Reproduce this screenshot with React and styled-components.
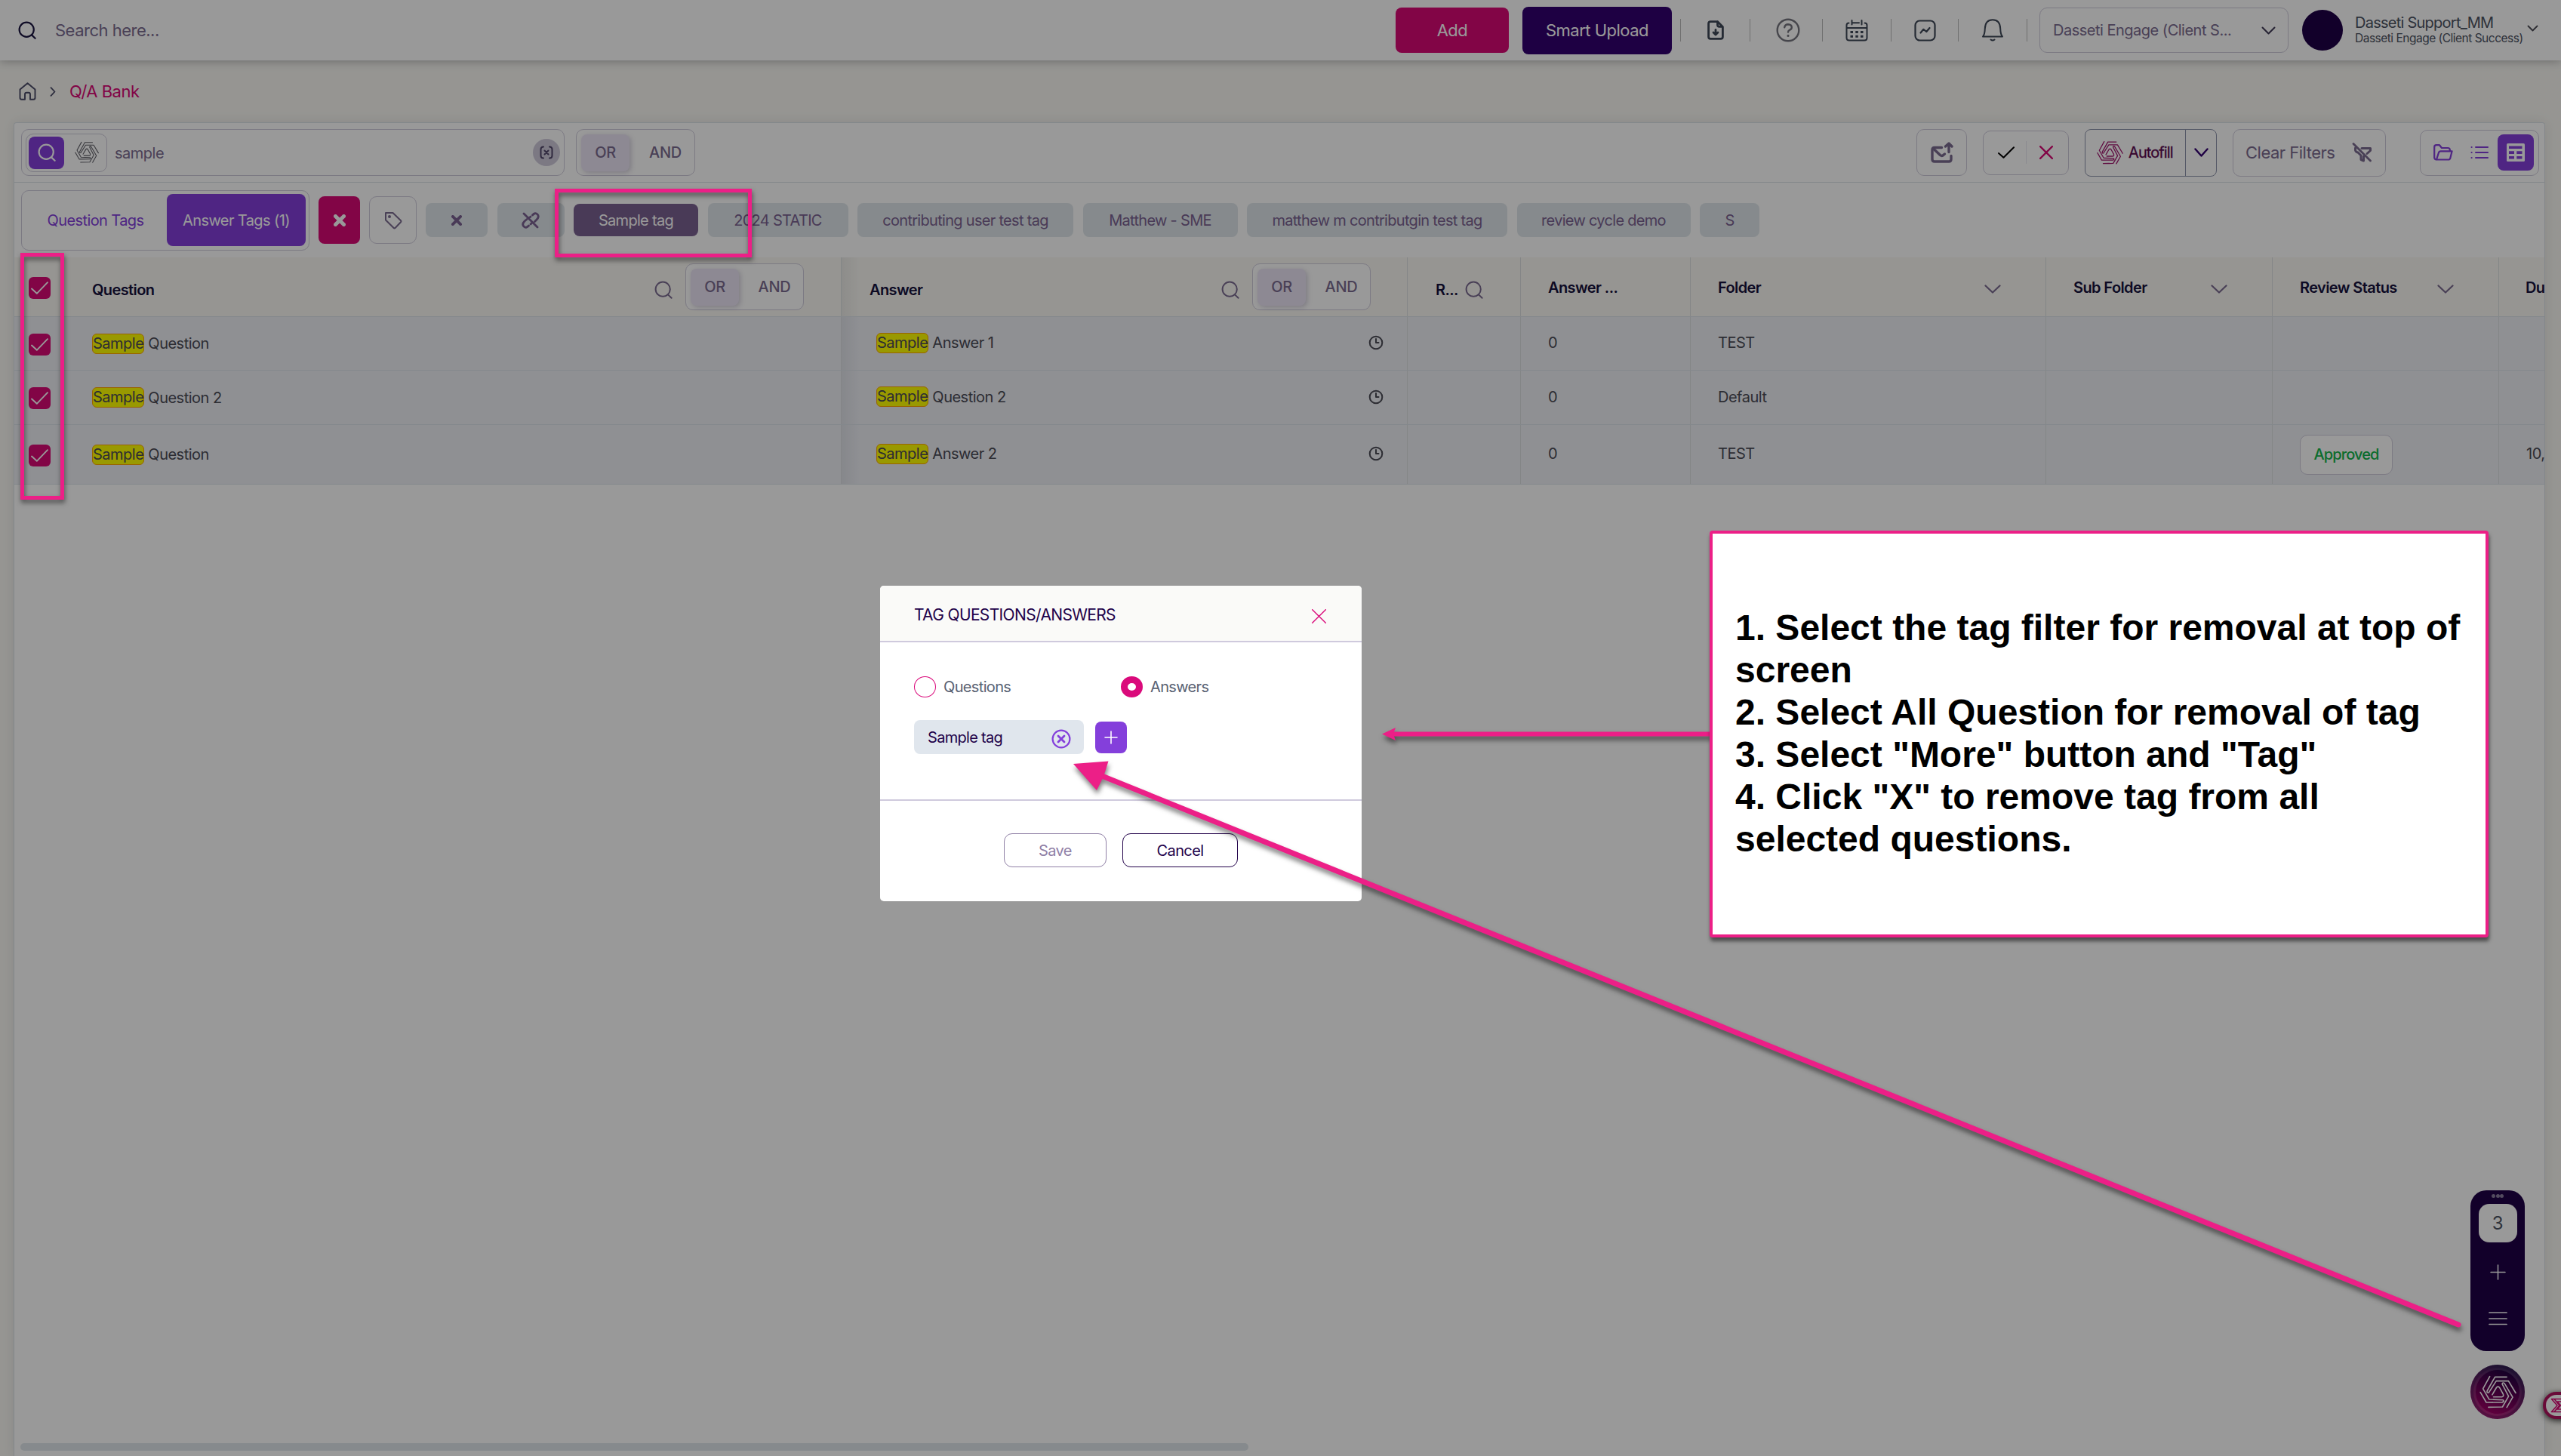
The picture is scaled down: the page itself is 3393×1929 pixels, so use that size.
import React from 'react'
import styled, { createGlobalStyle, css } from 'styled-components'


const tags = [
    { label: 'Sample tag', width: 165, active: true },
    { label: '2024 STATIC', width: 186 },
    { label: 'contributing user test tag', width: 286 },
    { label: 'Matthew - SME', width: 205 },
    { label: 'matthew m contributgin test tag', width: 345 },
    { label: 'review cycle demo', width: 230 },
    { label: 'S', width: 79 },
]

const rows = [
    { question: 'Question', answer: 'Answer 1', count: 0, folder: 'TEST', height: 71 },
    { question: 'Question 2', answer: 'Question 2', count: 0, folder: 'Default', height: 72 },
    { question: 'Question', answer: 'Answer 2', count: 0, folder: 'TEST', status: 'Approved', due: '10,', height: 79 },
]

const steps = [
    '1. Select the tag filter for removal at top of screen',
    '2. Select All Question for removal of tag',
    '3. Select "More" button and "Tag"',
    '4. Click "X" to remove tag from all selected questions.',
]

// icons

function Icon({ w, h = w, sw = 2, color = 'currentColor', children }) {
    return (
        <Glyph width={w} height={h} viewBox={`0 0 ${w} ${h}`} fill="none" stroke={color} strokeWidth={sw}
            strokeLinecap="round" strokeLinejoin="round">
            {children}
        </Glyph>
    )
}

const SearchIcon = ({ size = 24, sw = 2 }) => (
    <svg width={size} height={size} viewBox="0 0 24 24" fill="none" stroke="currentColor" strokeWidth={sw} strokeLinecap="round">
        <circle cx="11.2" cy="11.2" r="9.6" />
        <path d="M18 18.4l4.6 4.4" />
    </svg>
)

const Chevron = ({ w = 22, h = 12, sw = 2.2 }) => (
    <Icon w={w} h={h} sw={sw}><path d={`M1.5 1.5L${w / 2} ${h - 1.5}L${w - 1.5} 1.5`} /></Icon>
)

const Cross = ({ size = 18, sw = 2 }) => (
    <Icon w={size} sw={sw}><path d={`M${sw / 2} ${sw / 2}L${size - sw / 2} ${size - sw / 2}M${size - sw / 2} ${sw / 2}L${sw / 2} ${size - sw / 2}`} /></Icon>
)

const Plus = ({ size = 20, sw = 1.6 }) => (
    <Icon w={size} sw={sw}><path d={`M${size / 2} 1V${size - 1}M1 ${size / 2}H${size - 1}`} /></Icon>
)

const Check = ({ w = 22, h = 16, sw = 2 }) => (
    <Icon w={w} h={h} sw={sw}><path d={`M1 ${h * 0.56}L${w * 0.34} ${h - 1.2}L${w - 1} 1.2`} /></Icon>
)

// one arm of the mark, repeated three times around the centre
const arm = 'M35-61H-12L-43-6Q-46 4-37 2L-7-45H42L71 3'

const Spiral = ({ size = 48, sw = 5 }) => (
    <svg width={size} height={size} viewBox="-74 -74 148 148" fill="none" stroke="currentColor" strokeWidth={sw}
        strokeLinecap="round" strokeLinejoin="round">
        {[0, 120, 240].map(deg => <path key={deg} d={arm} transform={`rotate(${deg})`} />)}
        <path d="M-23 10L-6-19Q0-26 6-19L21 8Q24 18 15 19H-18" />
    </svg>
)

const Toggle = ({ width }) => (
    <ToggleBox $width={width}>
        <TogglePill>OR</TogglePill>
        <ToggleOption>AND</ToggleOption>
    </ToggleBox>
)

const TopBar = () => (
    <Header>
        <GlobalSearch>
            <SearchIcon size={24} sw={2.2} />
            <span>Search here...</span>
        </GlobalSearch>
        <AddButton>Add</AddButton>
        <UploadButton>Smart Upload</UploadButton>

        <HeaderSlot $width={93} $first>
            <Icon w={22} h={26} sw={2.8}>
                <path d="M13.5 1.6H4.2Q1.6 1.6 1.6 4.2V21.8Q1.6 24.4 4.2 24.4H17.8Q20.4 24.4 20.4 21.8V8.4L13.5 1.6V6Q13.5 8.4 16 8.4H20" />
                <path d="M11 12.5V18.5M8 16L11 19L14 16" />
            </Icon>
        </HeaderSlot>
        <HeaderSlot $width={96} $muted $shift={5}>
            <Icon w={32} sw={2.4}>
                <circle cx="16" cy="16" r="14.3" />
                <path d="M11.2 12.2Q12 8.2 16 8.2Q20.8 8.4 20.8 12.2Q20.8 14.6 18.2 15.6Q16 16.6 16 18.6" />
                <path d="M16 23.3V23.5" strokeWidth="3" />
            </Icon>
        </HeaderSlot>
        <HeaderSlot $width={91}>
            <Icon w={30} h={29} sw={2}>
                <path d="M4.5 4.5Q1.5 4.5 1.5 7.5V24Q1.5 27.5 5 27.5H25Q28.5 27.5 28.5 24V7.5Q28.5 4.5 25.5 4.5M10 4.2H18M1.5 11H28.5M8.5 1V6.5M21.5 1V6.5" />
                <path d="M6.5 16.5H10M13.3 16.5H16.8M20 16.5H23.5M6.5 22.2H10M13.3 22.2H16.8M20 22.2H23.5" strokeWidth="3" strokeLinecap="butt" />
            </Icon>
        </HeaderSlot>
        <HeaderSlot $width={89}>
            <Icon w={29} sw={2.2}>
                <rect x="1.5" y="1.5" width="26" height="26" rx="6" />
                <path d="M8.5 17.5L12.4 12.8L16.3 16L20.5 11" />
            </Icon>
        </HeaderSlot>
        <HeaderSlot $width={91}>
            <Icon w={30} h={30} sw={2}>
                <path d="M2 23.5H28Q25.5 21 25.2 13Q24.8 1.3 15 1.3Q5.2 1.3 4.8 13Q4.5 21 2 23.5Z" />
                <path d="M12.5 27.5Q15 29.5 17.5 27.5" />
            </Icon>
        </HeaderSlot>

        <ClientSelect>
            <span>Dasseti Engage (Client S...</span>
            <Chevron w={19} h={11} sw={2} />
        </ClientSelect>
        <Avatar />
        <UserInfo>
            <UserName>Dasseti Support_MM</UserName>
            <UserOrg>Dasseti Engage (Client Success)</UserOrg>
        </UserInfo>
        <UserCaret><Chevron w={15} h={9} sw={1.8} /></UserCaret>
    </Header>
)

const Toolbar = () => (
    <ToolbarRow>
        <SearchBox>
            <SearchModes>
                <ModeButton $active><SearchIcon size={24} sw={2.2} /></ModeButton>
                <ModeButton><Spiral size={32} sw={5} /></ModeButton>
            </SearchModes>
            <SearchValue>sample</SearchValue>
            <ClearBadge>
                <Icon w={18} h={18} sw={2}>
                    <path d="M5 1.5Q1.5 1.5 1.5 5V13Q1.5 16.5 5 16.5M13 1.5Q16.5 1.5 16.5 5V13Q16.5 16.5 13 16.5M6.5 6.5L11.5 11.5M11.5 6.5L6.5 11.5" />
                </Icon>
            </ClearBadge>
        </SearchBox>
        <Toggle width={158} />
        <Spacer />
        <OutlineButton $width={67}>
            <Icon w={30} h={28} sw={3.4}>
                <path d="M14.5 7.5H5Q2 7.5 2 10.5V23Q2 26 5 26H24Q27 26 27 23V18.5" />
                <path d="M3.5 9L12.5 17.5Q15 19.5 17 17.2L18.5 16" />
                <path d="M24 13.5V3M19.5 6L24 2L28 6" />
            </Icon>
        </OutlineButton>
        <DecisionBox>
            <Approve><Check w={22} h={16} sw={2} /></Approve>
            <Reject><Cross size={18} sw={2.2} /></Reject>
        </DecisionBox>
        <AutofillBox>
            <AutofillMain><Spiral size={35} sw={5.4} /><span>Autofill</span></AutofillMain>
            <AutofillCaret><Chevron w={19} h={12} sw={2.4} /></AutofillCaret>
        </AutofillBox>
        <ClearFilters>
            <span>Clear Filters</span>
            <Icon w={26} h={26} sw={3}>
                <path d="M2 1.5L24.5 24" strokeWidth="2.8" />
                <path d="M13 7.5H24.5V10.5L20 14.5M4.5 7V10Q5 12.5 8 13L12 17V22.5L15.5 24V18" />
            </Icon>
        </ClearFilters>
        <ViewModes>
            <Icon w={26} h={22} sw={2.2}>
                <path d="M4 20.5Q1.2 20.5 1.2 17.8V3.8Q1.2 1.2 3.8 1.2H8L11 5H19Q21.8 5 21.8 7.5V9M4 20.5L7 11.2Q7.5 9.3 9.5 9.3H24.6L22.3 18.5Q21.8 20.5 19.8 20.5H4" />
            </Icon>
            <Icon w={24} h={18} sw={2}>
                <path d="M7 2H23M7 9H23M7 16H23M1.5 2H1.7M1.5 9H1.7M1.5 16H1.7" />
            </Icon>
            <ActiveView>
                <svg width="24" height="24" viewBox="0 0 24 24">
                    <rect width="24" height="24" rx="1.5" fill="#fff" />
                    <path d="M3 3.5H20.5V7H3zM3 10.3H10V14H3zM13.3 10.3H20.5V14H13.3zM3 17H10V20.5H3zM13.3 17H20.5V20.5H13.3z" fill="#843fdb" />
                </svg>
            </ActiveView>
        </ViewModes>
    </ToolbarRow>
)

const TagBar = () => (
    <TagRow>
        <TagTabs>
            <TagTab $width={192}>Question Tags</TagTab>
            <TagTab $width={184} $active>Answer Tags (1)</TagTab>
        </TagTabs>
        <RemoveButton><Cross size={16} sw={5} /></RemoveButton>
        <TagButton>
            <Icon w={24} h={24} sw={2}>
                <path d="M2 2H11.5L22 12.2Q22.8 13.2 22 14.2L14.6 22Q13.5 22.8 12.6 22L2 11.5Z" />
                <circle cx="7" cy="7" r="1" />
            </Icon>
        </TagButton>
        <Tags>
            <Tag $width={82}><Cross size={14} sw={3.8} /></Tag>
            <Tag $width={89}>
                <Icon w={24} h={22} sw={2.8}>
                    <path d="M3 2L21 20M14.5 4Q18 0 21 3T20 10L17.5 12.5M9.5 18Q6 22 3 19T4 12L7 9.5M10 8L12 6M14 14L12 16" />
                </Icon>
            </Tag>
            {
                tags.map(({ label, width, active }) => <Tag key={label} $width={width} $active={active}>{label}</Tag>)
            }
        </Tags>
    </TagRow>
)

const CheckCell = () => <Checkbox><Check w={23} h={17} sw={1.9} /></Checkbox>

const Table = () => (
    <div>
        <HeadRow>
            <Cell $left={19} $right={49}>
                <CheckCell />
                <HeadText $lead $low>Question</HeadText>
                <Spacer />
                <HeadSearch><SearchIcon size={24} /></HeadSearch>
                <Toggle width={157} />
            </Cell>
            <Cell $left={37} $right={48} $shaded>
                <HeadText $low>Answer</HeadText>
                <Spacer />
                <HeadSearch><SearchIcon size={24} /></HeadSearch>
                <Toggle width={157} />
            </Cell>
            <Cell $left={37}>
                <HeadText $low>R...</HeadText>
                <HeadSearch $near><SearchIcon size={24} /></HeadSearch>
            </Cell>
            <Cell $left={36}><HeadText>Answer ...</HeadText></Cell>
            <Cell $left={36} $right={59}><HeadText>Folder</HeadText><Spacer /><HeadCaret><Chevron /></HeadCaret></Cell>
            <Cell $left={36} $right={59}><HeadText>Sub Folder</HeadText><Spacer /><HeadCaret><Chevron /></HeadCaret></Cell>
            <Cell $left={36} $right={59}><HeadText>Review Status</HeadText><Spacer /><HeadCaret><Chevron /></HeadCaret></Cell>
            <Cell $left={35}><HeadText>Du</HeadText></Cell>
        </HeadRow>
        {
            rows.map((row, index) => (
                <BodyRow key={index} $height={row.height}>
                    <Cell $left={19}>
                        <CheckCell />
                        <Match $lead>Sample</Match>
                        <MatchRest>{row.question}</MatchRest>
                    </Cell>
                    <Cell $left={46} $right={31} $shaded $up>
                        <Match>Sample</Match>
                        <MatchRest>{row.answer}</MatchRest>
                        <Spacer />
                        <Icon w={20} sw={2}><circle cx="10" cy="10" r="8.3" /><path d="M10 5V10H13.5" /></Icon>
                    </Cell>
                    <Cell />
                    <Cell $left={36} $up>{row.count}</Cell>
                    <Cell $left={36} $up>{row.folder}</Cell>
                    <Cell />
                    <Cell $left={36}>{row.status && <Status>{row.status}</Status>}</Cell>
                    <Cell $left={36} $up>{row.due}</Cell>
                </BodyRow>
            ))
        }
    </div>
)

const Widget = () => (
    <WidgetColumn>
        <WidgetPill>
            <Dots><i /><i /><i /></Dots>
            <WidgetCount>3</WidgetCount>
            <Plus size={21} sw={1.5} />
            <Icon w={25} h={18} sw={1.7}><path d="M1 1H24M1 9H24M1 16.5H24" /></Icon>
        </WidgetPill>
        <WidgetLogo><Spiral size={49} sw={5} /></WidgetLogo>
    </WidgetColumn>
)

const TagModal = () => (
    <Modal>
        <ModalHead>
            <span>TAG QUESTIONS/ANSWERS</span>
            <Cross size={19} sw={1.4} />
        </ModalHead>
        <ModalBody>
            <Choices>
                <Choice><Radio />Questions</Choice>
                <Choice><Radio $checked />Answers</Choice>
            </Choices>
            <Assigned>
                <AssignedTag>
                    Sample tag
                    <Icon w={26} sw={2.2} color="#843fdb">
                        <circle cx="13" cy="13" r="11.4" />
                        <path d="M9 9L17 17M17 9L9 17" strokeWidth="2.8" />
                    </Icon>
                </AssignedTag>
                <AddTag><Plus size={18} sw={1.6} /></AddTag>
            </Assigned>
        </ModalBody>
        <ModalFoot>
            <ModalButton $width={136} $disabled>Save</ModalButton>
            <ModalButton $width={153}>Cancel</ModalButton>
        </ModalFoot>
    </Modal>
)

const Arrows = () => (
    <ArrowLayer width="3393" height="1929" viewBox="0 0 3393 1929">
        <path d="M2267 972.5H1845" stroke="#ec1f87" strokeWidth="6" />
        <path d="M1831 972.5L1849 964L1846 972.5L1849 981Z" fill="#ec1f87" />
        <path d="M3257 1755L1460 1028" stroke="#ec1f87" strokeWidth="7" strokeLinecap="round" />
        <path d="M1422 1012L1468.5 1008.5L1462 1029L1453 1047Z" fill="#ec1f87" />
    </ArrowLayer>
)

function App() {
    return (
        <Screen>
            <GlobalStyle />
            <TopBar />
            <Breadcrumb>
                <Icon w={23} h={24} sw={1.9}>
                    <path d="M1.5 9.5L11.5 1.2L21.5 9.5V20.5Q21.5 22.8 19.2 22.8H15V16Q15 13.8 12.8 13.8H10.2Q8 13.8 8 16V22.8H3.8Q1.5 22.8 1.5 20.5Z" />
                </Icon>
                <Icon w={8} h={13} sw={1.8}><path d="M1.5 1.2L6.5 6.5L1.5 11.8" /></Icon>
                <a>Q/A Bank</a>
            </Breadcrumb>
            <Panel>
                <Toolbar />
                <TagBar />
                <Table />
                <Spacer />
                <ScrollThumb />
            </Panel>
            <Widget />
            <EdgeBadge>
                <Icon w={24} h={20} sw={1.6}>
                    <path d="M24 1.5H1.5L9 10L1.5 18.5H24M24 5H9L13.5 10L9 15H24M5 1.5L12 10L5 18.5" />
                </Icon>
            </EdgeBadge>
            <Backdrop />

            <TagModal />
            <Marker $left={735} $top={250} $width={261} $height={91} />
            <Marker $left={27} $top={335} $width={58} $height={327} />
            <Arrows />
            <Callout>
                {steps.map(step => <p key={step}>{step}</p>)}
            </Callout>
        </Screen>
    )
}

export default App

const GlobalStyle = createGlobalStyle`
    * {
        box-sizing: border-box;
    }

    body {
        margin: 0;
        background-color: #faf9f4;
    }
`

const Glyph = styled.svg`
    display: block;
    flex: none;
`

const Screen = styled.div`
    position: relative;
    display: flex;
    flex-direction: column;
    width: 3393px;
    height: 1929px;
    overflow: hidden;
    background-color: #faf9f4;
    font-family: Inter, 'Liberation Sans', sans-serif;
    font-size: 20px;
    letter-spacing: -0.5px;
    color: #4b4b55;
    white-space: nowrap;
`

const Spacer = styled.div`
    flex: 1;
`

const center = css`
    display: flex;
    align-items: center;
    justify-content: center;
`

const outline = css`
    border: 1px solid #cfcbdb;
    border-radius: 10px;
`

const Header = styled.header`
    position: relative;
    display: flex;
    align-items: center;
    flex: none;
    height: 80px;
    background-color: #fff;
    box-shadow: 0 1px 12px rgba(40, 40, 50, 0.35);
`

const GlobalSearch = styled.div`
    display: flex;
    align-items: center;
    flex: none;
    width: 1849px;
    padding-left: 24px;
    gap: 25px;
    color: #1a1440;
    font-size: 22px;

    > span {
        color: #7b6b90;
    }
`

const AddButton = styled.button`
    ${center}
    flex: none;
    width: 150px;
    height: 60px;
    margin-right: 18px;
    border: 0;
    border-radius: 8px;
    background-color: #d90975;
    color: #fff;
    font: inherit;
    font-size: 22px;
    letter-spacing: -0.5px;
`

const UploadButton = styled(AddButton)`
    width: 198px;
    height: 63px;
    margin-right: 11px;
    background-color: #320071;
`

const HeaderSlot = styled.div`
    ${center}
    flex: none;
    width: ${({ $width }) => $width}px;
    height: 30px;
    padding-left: ${({ $shift }) => $shift || 0}px;
    border-right: 1px solid #bbb;
    border-left: ${({ $first }) => $first ? '1px solid #bbb' : '0'};
    color: ${({ $muted }) => $muted ? '#76767f' : '#3f4858'};
`

const ClientSelect = styled.div`
    ${outline}
    display: flex;
    align-items: center;
    justify-content: space-between;
    flex: none;
    width: 330px;
    height: 60px;
    margin-left: 16px;
    padding: 0 16px 0 17px;
    color: #3f3a55;

    > span {
        color: #7b6b90;
    }
`

const Avatar = styled.div`
    flex: none;
    width: 54px;
    height: 54px;
    margin: 0 16px 0 18px;
    border-radius: 50%;
    background-color: #1e0046;
`

const UserInfo = styled.div`
    flex: none;
    width: 228px;
    color: #4b5262;
`

const UserName = styled.div`
    line-height: 21px;
    letter-spacing: -0.75px;
`

const UserOrg = styled.div`
    font-size: 15.5px;
    line-height: 20px;
`

const UserCaret = styled.div`
    margin-bottom: 6px;
`

const Breadcrumb = styled.nav`
    display: flex;
    align-items: center;
    flex: none;
    height: 82px;
    padding-left: 25px;
    gap: 18px;
    color: #4a4a66;
    font-size: 22px;

    > a {
        color: #d90975;
    }
`

const Panel = styled.main`
    display: flex;
    flex-direction: column;
    flex: 1;
    width: 3354px;
    margin-left: 18px;
    overflow: hidden;
    border: 1px solid #dbe2e8;
    border-bottom: 0;
    border-radius: 4px 4px 0 0;
    background-color: #fff;
    box-shadow: 0 0 16px rgba(40, 40, 60, 0.1);
`

const ToolbarRow = styled.div`
    display: flex;
    align-items: center;
    height: 79px;
    padding: 0 7px 0 9px;
    border-bottom: 1px solid #d9e1e6;
`

const SearchBox = styled.div`
    ${outline}
    display: flex;
    align-items: center;
    width: 720px;
    height: 62px;
    margin-right: 15px;
    padding: 0 5px;
`

const SearchModes = styled.div`
    ${outline}
    display: flex;
    align-items: center;
    width: 108px;
    height: 51px;
    padding-left: 3px;
    gap: 13px;
`

const ModeButton = styled.div`
    ${center}
    width: ${({ $active }) => $active ? 47 : 33}px;
    height: 43px;
    border-radius: 8px;
    background-color: ${({ $active }) => $active ? '#843fdb' : 'transparent'};
    color: ${({ $active }) => $active ? '#fff' : '#5e5e66'};
`

const SearchValue = styled.div`
    flex: 1;
    margin-left: 10px;
    padding-top: 2px;
    color: #7b6b90;
`

const ClearBadge = styled.div`
    ${center}
    width: 36px;
    height: 36px;
    border-radius: 50%;
    background-color: #cfcadb;
    color: #51466a;
`

const ToggleBox = styled.div`
    ${outline}
    display: flex;
    align-items: center;
    flex: none;
    width: ${({ $width }) => $width}px;
    height: 62px;
    padding-left: 6px;
    background-color: #fff;
    color: #7b6b90;
    font-weight: 500;
    letter-spacing: -0.3px;
`

const TogglePill = styled.div`
    ${center}
    width: 64px;
    height: 49px;
    border-radius: 8px;
    background-color: #ebe5f5;
    box-shadow: 2px 2px 6px rgba(80, 60, 110, 0.25);
`

const ToggleOption = styled.div`
    ${center}
    flex: 1;
    padding-left: 9px;
`

const OutlineButton = styled.div`
    ${outline}
    ${center}
    flex: none;
    width: ${({ $width }) => $width}px;
    height: 62px;
    margin-right: 21px;
    color: #7b6b90;
`

const DecisionBox = styled.div`
    ${outline}
    display: flex;
    align-items: center;
    width: 114px;
    height: 59px;
    margin-right: 21px;
`

const Approve = styled.div`
    ${center}
    width: 57px;
    height: 30px;
    padding-left: 4px;
    border-right: 1px solid #e6e6ee;
    color: #000;
`

const Reject = styled.div`
    ${center}
    flex: 1;
    padding-right: 4px;
    color: #d90975;
`

const AutofillBox = styled.div`
    display: flex;
    width: 175px;
    height: 63px;
    margin-right: 21px;
    border: 1px solid #8d93aa;
    border-radius: 8px;
`

const AutofillMain = styled.div`
    display: flex;
    align-items: center;
    width: 133px;
    padding-left: 15px;
    gap: 7px;
    border-right: 1px solid #8d93aa;
    color: #a0166e;

    > span {
        color: #5c0a50;
        letter-spacing: -0.9px;
        -webkit-text-stroke: 0.3px #5c0a50;
    }
`

const AutofillCaret = styled.div`
    ${center}
    flex: 1;
    color: #320071;
`

const ClearFilters = styled(OutlineButton)`
    justify-content: space-between;
    width: 203px;
    height: 63px;
    margin-right: 45px;
    padding: 0 18px 0 16px;
    font-size: 22px;
`

const ViewModes = styled.div`
    ${outline}
    display: flex;
    align-items: center;
    justify-content: space-between;
    width: 158px;
    height: 61px;
    padding: 0 6px 0 17px;
    color: #843fdb;

    > svg:nth-of-type(2) {
        margin: 0 -10px 0 0;
    }
`

const ActiveView = styled.div`
    ${center}
    width: 48px;
    height: 48px;
    border-radius: 8px;
    background-color: #843fdb;
`

const TagRow = styled.div`
    display: flex;
    align-items: center;
    height: 99px;
    padding-left: 9px;
`

const TagTabs = styled.div`
    ${outline}
    display: flex;
    align-items: center;
    width: 382px;
    height: 80px;
    margin-right: 12px;
`

const TagTab = styled.div`
    ${center}
    width: ${({ $width }) => $width}px;
    height: 69px;
    padding-left: ${({ $active }) => $active ? 0 : 3}px;
    border-radius: 8px;
    background-color: ${({ $active }) => $active ? '#843fdb' : 'transparent'};
    color: ${({ $active }) => $active ? '#fff' : '#843fdb'};
    letter-spacing: -0.6px;
`

const RemoveButton = styled.div`
    ${center}
    width: 55px;
    height: 63px;
    margin-right: 12px;
    border-radius: 8px;
    background-color: #d90975;
    color: #fff;
`

const TagButton = styled(OutlineButton)`
    width: 63px;
    height: 63px;
    margin-right: 12px;
`

const Tags = styled.div`
    display: flex;
    align-items: center;
    gap: 12.5px;
`

const Tag = styled.div`
    ${center}
    flex: none;
    width: ${({ $width }) => $width}px;
    height: ${({ $active }) => $active ? 43 : 45}px;
    border-radius: 8px;
    background-color: ${({ $active }) => $active ? '#7b6291' : '#dfe7eb'};
    color: ${({ $active }) => $active ? '#fff' : '#7b6291'};
    letter-spacing: -0.7px;
`

const Row = styled.div`
    display: grid;
    grid-template-columns: 1096px 750px 150px 225px 471px 300px 300px 60px;
    border-bottom: 1px solid #dce3ea;
`

const HeadRow = styled(Row)`
    height: 79px;
    background-color: #faf9f4;
`

const BodyRow = styled(Row)`
    height: ${({ $height }) => $height}px;
    background-color: #eef0f6;
`

const Cell = styled.div`
    display: flex;
    align-items: center;
    min-width: 0;
    overflow: hidden;
    padding-left: ${({ $left }) => $left || 0}px;
    padding-right: ${({ $right }) => $right || 0}px;
    padding-bottom: ${({ $up }) => $up ? 2 : 0}px;
    border-right: 1px solid #dcdfe2;
    background-image: ${({ $shaded }) => $shaded ? 'linear-gradient(to right, rgba(0, 0, 20, 0.06), transparent 24px)' : 'none'};

    &:last-child {
        border-right: 0;
    }
`

const HeadText = styled.div`
    margin-left: ${({ $lead }) => $lead ? 55 : 0}px;
    padding-top: ${({ $low }) => $low ? 7 : 1}px;
    color: #16123c;
    font-weight: 600;
    letter-spacing: -0.6px;
`

const HeadSearch = styled.div`
    display: flex;
    margin-right: 17px;
    margin-left: ${({ $near }) => $near ? 9 : 0}px;
    padding-top: 7px;
    color: #7b6b90;
`

const HeadCaret = styled.div`
    padding-top: 6px;
    color: #7b6b90;
`

const Checkbox = styled.div`
    ${center}
    flex: none;
    width: 29px;
    height: 29px;
    margin-top: 2px;
    border-radius: 6px;
    background-color: #d90975;
    color: #fff;
`

const Match = styled.span`
    height: 27px;
    margin-left: ${({ $lead }) => $lead ? 55 : 0}px;
    border: 1px solid #ffa500;
    border-radius: 6px;
    background-color: #ff0;
    line-height: 25px;
`

const MatchRest = styled.span`
    margin-left: 5px;
`

const Status = styled.div`
    ${outline}
    ${center}
    width: 123px;
    height: 53px;
    background-color: #fff;
    color: #12b54c;
    font-weight: 500;
    letter-spacing: -0.9px;
`

const ScrollThumb = styled.div`
    flex: none;
    width: 1627px;
    height: 10px;
    margin: 0 0 7px 8px;
    border-radius: 5px;
    background-color: #dfe7eb;
`

const WidgetColumn = styled.div`
    position: absolute;
    top: 1577px;
    left: 3273px;
    display: flex;
    flex-direction: column;
    gap: 18px;
    width: 72px;
`

const WidgetPill = styled.div`
    display: flex;
    flex-direction: column;
    align-items: center;
    height: 213px;
    padding-top: 5px;
    border-radius: 21px;
    background-color: #1e0046;
    color: #fff;

    > svg:nth-of-type(1) {
        margin: 29px 0 42px;
    }
`

const Dots = styled.div`
    display: flex;
    gap: 0.5px;
    margin-bottom: 8px;

    > i {
        width: 5px;
        height: 5px;
        border-radius: 50%;
        background-color: #8a7d9e;
    }
`

const WidgetCount = styled.div`
    ${center}
    width: 51px;
    height: 51px;
    border-radius: 14px;
    background-color: #fff;
    color: #4b5262;
    font-size: 24px;
`

const WidgetLogo = styled.div`
    ${center}
    width: 72px;
    height: 72px;
    border-radius: 50%;
    background: linear-gradient(200deg, #12003c 10%, #c00070 100%);
    box-shadow: inset 0 0 0 4px rgba(30, 0, 60, 0.25), inset 0 0 0 7px rgba(255, 255, 255, 0.15);
    color: #fff;
`

const EdgeBadge = styled.div`
    position: absolute;
    top: 1844px;
    left: 3369px;
    display: flex;
    align-items: center;
    width: 60px;
    height: 36px;
    padding-left: 6px;
    border: 4px solid #b0125e;
    border-radius: 18px;
    background-color: #fff;
    box-shadow: 0 2px 8px rgba(0, 0, 0, 0.8);
    color: #d90975;
`

const Backdrop = styled.div`
    position: absolute;
    inset: 0;
    background-color: rgba(0, 0, 0, 0.4);
`

const Modal = styled.div`
    position: absolute;
    top: 776px;
    left: 1166px;
    width: 638px;
    height: 418px;
    overflow: hidden;
    border-radius: 5px;
    background-color: #fff;
    color: #22024a;
`

const ModalHead = styled.div`
    display: flex;
    align-items: center;
    justify-content: space-between;
    height: 75px;
    padding: 3px 47px 0 45px;
    border-bottom: 2px solid #cfcadd;
    background-color: #fafaf8;
    font-size: 21px;
    letter-spacing: -0.65px;

    > svg {
        margin-top: 4px;
        color: #da0a7b;
    }
`

const ModalBody = styled.div`
    height: 210px;
    padding: 45px 0 0 45px;
    border-bottom: 2px solid #cfcadd;
`

const Choices = styled.div`
    display: flex;
    height: 28px;
    margin-bottom: 30px;
`

const Choice = styled.div`
    display: flex;
    align-items: center;
    width: 274px;
    gap: 10px;
    color: #596273;
    letter-spacing: -0.65px;
`

const Radio = styled.span`
    width: 29px;
    height: 28px;
    border: ${({ $checked }) => $checked ? 9 : 1.4}px solid #da0a7b;
    border-radius: 50%;
`

const Assigned = styled.div`
    display: flex;
    align-items: center;
    gap: 15px;
`

const AssignedTag = styled.div`
    display: flex;
    align-items: center;
    justify-content: space-between;
    width: 225px;
    height: 45px;
    padding: 0 17px 0 18px;
    border-radius: 8px;
    background-color: #e0e6ed;
    letter-spacing: -0.7px;

    > svg {
        margin-top: 4px;
    }
`

const AddTag = styled.div`
    ${center}
    width: 42px;
    height: 42px;
    margin-top: 1px;
    border-radius: 8px;
    background-color: #843fdb;
    color: #fff;
`

const ModalFoot = styled.div`
    display: flex;
    justify-content: center;
    padding-top: 43px;
    gap: 21px;
`

const ModalButton = styled.button`
    width: ${({ $width }) => $width}px;
    height: 45px;
    padding: 0;
    border: 1.4px solid ${({ $disabled }) => $disabled ? '#9080a6' : '#22024a'};
    border-radius: 11px;
    background-color: #fff;
    color: ${({ $disabled }) => $disabled ? '#9080a6' : '#22024a'};
    font: inherit;
    letter-spacing: -0.6px;
`

const Marker = styled.div`
    position: absolute;
    top: ${({ $top }) => $top}px;
    left: ${({ $left }) => $left}px;
    width: ${({ $width }) => $width}px;
    height: ${({ $height }) => $height}px;
    border: 5px solid #ec1f87;
    filter: drop-shadow(1px 4px 3px rgba(0, 0, 0, 0.5));
`

const ArrowLayer = styled.svg`
    position: absolute;
    top: 0;
    left: 0;
    filter: drop-shadow(1px 5px 3px rgba(0, 0, 0, 0.5));
`

const Callout = styled.div`
    position: absolute;
    top: 703px;
    left: 2265px;
    display: flex;
    flex-direction: column;
    justify-content: center;
    width: 1032px;
    height: 539px;
    padding: 0 18px 2px 30px;
    border: 4px solid #ec1f87;
    border-radius: 4px;
    background-color: #fff;
    box-shadow: 1px 5px 5px rgba(0, 0, 0, 0.5);
    color: #000;
    font-family: 'Liberation Sans', Arial, sans-serif;
    font-size: 48px;
    font-weight: 700;
    line-height: 56px;
    letter-spacing: 0;
    white-space: normal;

    > p {
        margin: 0;
    }
`
